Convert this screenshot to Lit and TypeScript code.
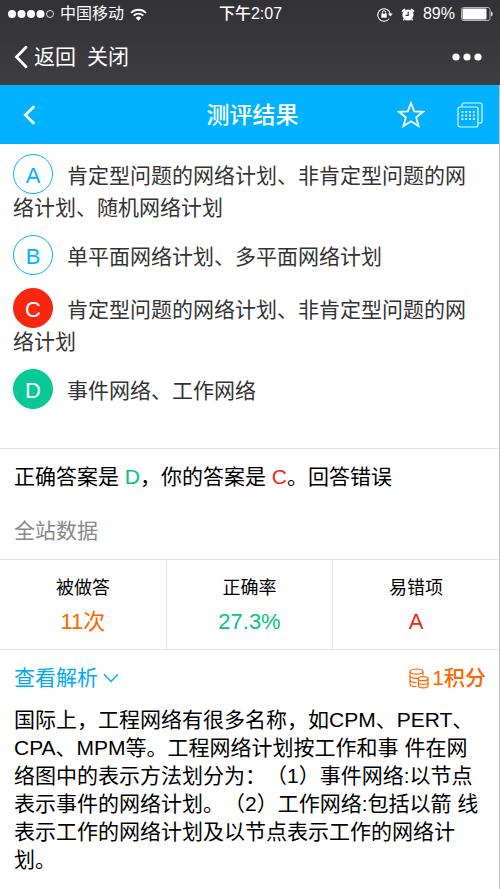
import { LitElement, html, css, svg } from "lit";
import { customElement } from "lit/decorators.js";
import { classMap } from "lit/directives/class-map.js";

type Mark = "plain" | "wrong" | "right";
interface Option {
  key: string;
  text: string;
  mark: Mark;
}

const OPTIONS: Option[] = [
  { key: "A", text: "肯定型问题的网络计划、非肯定型问题的网络计划、随机网络计划", mark: "plain" },
  { key: "B", text: "单平面网络计划、多平面网络计划", mark: "plain" },
  { key: "C", text: "肯定型问题的网络计划、非肯定型问题的网络计划", mark: "wrong" },
  { key: "D", text: "事件网络、工作网络", mark: "right" },
];

const EXPLANATION =
  "国际上，工程网络有很多名称，如CPM、PERT、CPA、MPM等。工程网络计划按工作和事 件在网络图中的表示方法划分为：（1）事件网络:以节点表示事件的网络计划。（2）工作网络:包括以箭 线表示工作的网络计划及以节点表示工作的网络计划。";

const base = css`
  :host {
    display: block;
  }
  button {
    display: flex;
    align-items: center;
    margin: 0;
    padding: 0;
    border: 0;
    background: none;
    color: inherit;
    font: inherit;
    cursor: pointer;
  }
  svg {
    display: block;
    flex: none;
  }
`;

@customElement("status-bar")
export class StatusBar extends LitElement {
  static styles = [
    base,
    css`
      .bar {
        display: grid;
        grid-template-columns: 1fr auto 1fr;
        align-items: center;
        height: 28px;
        padding: 0 7px 0 8px;
        font-size: 16px;
        line-height: 28px;
      }
      .side {
        display: flex;
        align-items: center;
        gap: 6px;
      }
      .end {
        justify-content: flex-end;
      }
      .time {
        font-weight: 500;
      }
    `,
  ];

  render() {
    return html`
      <div class="bar">
        <div class="side">
          <svg width="46" height="10" viewBox="0 0 46 10" fill="#fff">
            ${[4, 13.5, 23, 32.5].map((x) => svg`<circle cx=${x} cy="5" r="4"/>`)}
            <circle cx="42" cy="5" r="3.5" fill="none" stroke="#fff" stroke-width="0.8" />
          </svg>
          <span>中国移动</span>
          <svg width="17" height="13" viewBox="0 0 17 13" fill="none" stroke="#fff" stroke-width="1.9">
            <path d="M1 4.8a10.6 10.6 0 0 1 15 0M3.7 7.6a6.8 6.8 0 0 1 9.6 0" />
            <path d="M8.5 12.7 5.8 9.9a3.8 3.8 0 0 1 5.4 0z" fill="#fff" stroke="none" />
          </svg>
        </div>
        <span class="time">下午2:07</span>
        <div class="side end">
          <svg width="16" height="15" viewBox="0 0 16 15" fill="none" stroke="#fff">
            <path d="M12.2 11.7A6.3 6.3 0 1 1 13.3 7" stroke-width="1.1" />
            <path d="M10.9 6.6h4.8l-2.4 3z" fill="#fff" stroke="none" />
            <path d="M4.3 6.7h5.4v4H4.3z" fill="#fff" stroke="none" />
            <path d="M5.3 7V5.4a1.7 1.7 0 0 1 3.4 0V7" stroke-width="1" />
          </svg>
          <svg width="18" height="15" viewBox="0 0 18 15">
            <circle cx="9" cy="8" r="5.6" fill="#fff" />
            <path d="M3.6 4.2 5.6 2.500M14.400 4.200 12.400 2.500" stroke="#fff" stroke-width="1.800" stroke-linecap="round" />
            <path d="M5.200 12 4.400 13.400M12.800 12l.8 1.400" stroke="#fff" stroke-width="1.4" />
            <path d="M9.2 4.8v3.6H6.6" stroke="#38373c" stroke-width="1.2" fill="none" />
          </svg>
          <span>89%</span>
          <svg width="32" height="14" viewBox="0 0 32 14">
            <rect x="0.5" y="0.5" width="28.5" height="13" rx="2" fill="none" stroke="#b5b5b8" />
            <rect x="1.5" y="1.5" width="24" height="11" rx="1" fill="#fff" />
            <path d="M30 4.6c2.2.5 2.2 4.3 0 4.8z" fill="#ddd" />
          </svg>
        </div>
      </div>
    `;
  }
}

@customElement("browser-nav")
export class BrowserNav extends LitElement {
  static styles = [
    base,
    css`
      .nav {
        display: flex;
        align-items: center;
        height: 57px;
        padding: 0 18px 0 14px;
        font-size: 21px;
        line-height: 28px;
      }
      .back {
        gap: 6px;
        margin-right: 11px;
      }
      .more {
        margin-left: auto;
      }
    `,
  ];

  render() {
    return html`
      <nav class="nav">
        <button class="back">
          <svg width="14" height="24" viewBox="0 0 14 24" fill="none" stroke="#fff" stroke-width="2.8" stroke-linecap="round">
            <path d="M12 2.3 2.5 12 12 21.7" />
          </svg>
          返回
        </button>
        <button>关闭</button>
        <button class="more" aria-label="更多">
          <svg width="30" height="8" viewBox="0 0 30 8" fill="#fff">
            <circle cx="4" cy="4" r="3.6" />
            <circle cx="15" cy="4" r="3.6" />
            <circle cx="26" cy="4" r="3.6" />
          </svg>
        </button>
      </nav>
    `;
  }
}

@customElement("page-header")
export class PageHeader extends LitElement {
  static styles = [
    base,
    css`
      .header {
        display: grid;
        grid-template-columns: 1fr auto 1fr;
        align-items: center;
        height: 59px;
        padding: 0 16px 0 22px;
        background: #00b2ff;
        color: #fff;
      }
      .title {
        margin: 0;
        font-size: 23px;
        font-weight: 500;
        line-height: 32px;
      }
      .actions {
        display: flex;
        align-items: center;
        justify-content: flex-end;
        gap: 32px;
      }
    `,
  ];

  render() {
    return html`
      <header class="header">
        <button aria-label="返回">
          <svg width="14" height="20" viewBox="0 0 14 20" fill="none" stroke="#fff" stroke-width="2.6">
            <path d="M12.3 1.2 3.2 10l9.1 8.8" />
          </svg>
        </button>
        <h1 class="title">测评结果</h1>
        <div class="actions">
          <button aria-label="收藏">
            <svg width="28" height="28" viewBox="0 0 28 28" fill="none" stroke="#fff" stroke-width="1.8">
              <path d="M14 2l3.200 8.300 8.900.5-6.900 5.600 2.300 8.600L14 20.200 6.500 25l2.300-8.600-6.900-5.600 8.900-.5z" />
            </svg>
          </button>
          <button aria-label="答题卡">
            <svg width="26" height="26" viewBox="0 0 26 26" fill="none" stroke="#e2f6ff" stroke-width="1.2">
              <rect x="1" y="5" width="20" height="20" rx="2" />
              <path d="M5 5V3a2 2 0 0 1 2-2h16a2 2 0 0 1 2 2v16a2 2 0 0 1-2 2h-2" />
              <path d="M4.500 10h14M4.500 13.500h14M4.500 17h14" stroke-width="1.8" stroke-dasharray="1.800 2" />
            </svg>
          </button>
        </div>
      </header>
    `;
  }
}

@customElement("option-list")
export class OptionList extends LitElement {
  static styles = [
    base,
    css`
      .list {
        margin: 0;
        padding: 10px 13px 26px;
        list-style: none;
        color: #333;
      }
      .item {
        margin-bottom: 13px;
        line-height: 28px;
      }
      .key {
        display: inline-block;
        box-sizing: border-box;
        width: 40px;
        height: 40px;
        margin-right: 14px;
        border: 1px solid #00b2ff;
        border-radius: 50%;
        color: #00b2ff;
        font-size: 22px;
        line-height: 42px;
        text-align: center;
      }
      .wrong {
        border-color: #f9270f;
        background: #f9270f;
        color: #fff;
      }
      .right {
        border-color: #06c995;
        background: #06c995;
        color: #fff;
      }
    `,
  ];

  render() {
    return html`
      <ul class="list">
        ${OPTIONS.map(
          (o) => html`<li class="item"><span class=${classMap({
            key: true,
            wrong: o.mark === "wrong",
            right: o.mark === "right",
          })}>${o.key}</span>${o.text}</li>`
        )}
      </ul>
    `;
  }
}

@customElement("site-stats")
export class SiteStats extends LitElement {
  static styles = [
    base,
    css`
      .stats {
        width: 100%;
        border-collapse: collapse;
        table-layout: fixed;
        border-top: 1px solid #e4e4e4;
        border-bottom: 1px solid #e4e4e4;
        text-align: center;
      }
      .label,
      .value {
        padding: 0;
        border-left: 1px solid #e4e4e4;
        font-weight: 400;
      }
      .label:first-child,
      .value:first-child {
        border-left: 0;
      }
      .label {
        padding-top: 14px;
        font-size: 18px;
        line-height: 28px;
      }
      .value {
        padding: 4px 0 11px;
        font-size: 22px;
        line-height: 32px;
      }
      .orange {
        color: #ff6600;
      }
      .green {
        color: #06c384;
      }
      .red {
        color: #f52313;
      }
    `,
  ];

  render() {
    return html`
      <table class="stats">
        <thead>
          <tr>
            <th class="label" scope="col">被做答</th>
            <th class="label" scope="col">正确率</th>
            <th class="label" scope="col">易错项</th>
          </tr>
        </thead>
        <tbody>
          <tr>
            <td class="value orange">11次</td>
            <td class="value green">27.3%</td>
            <td class="value red">A</td>
          </tr>
        </tbody>
      </table>
    `;
  }
}

@customElement("app-root")
export class AppRoot extends LitElement {
  static styles = [
    base,
    css`
      :host {
        min-height: 100vh;
        background: #fff;
        color: #000;
        font-family: "Liberation Sans", "Noto Sans CJK SC", sans-serif;
        font-size: 21px;
        text-spacing-trim: space-all;
      }
      .page {
        box-sizing: border-box;
        min-height: 100vh;
        border-right: 1px solid #c4c4c4;
      }
      .chrome {
        margin-right: -1px;
        background: linear-gradient(#323136, #3e3d42);
        color: #fff;
      }
      .answer {
        margin: 0;
        padding: 14px 14px 12px;
        border-top: 1px solid #e4e4e4;
        line-height: 28px;
      }
      .section {
        margin: 0;
        padding: 14px;
        color: #888;
        font-size: 21px;
        font-weight: 400;
        line-height: 28px;
      }
      .right {
        color: #06c384;
      }
      .wrong {
        color: #f52313;
      }
      .toolbar {
        display: flex;
        align-items: center;
        justify-content: space-between;
        padding: 14px 13px 14px 14px;
        line-height: 28px;
      }
      .toggle {
        gap: 5px;
        color: #00aaf5;
      }
      .points {
        display: flex;
        align-items: center;
        gap: 3px;
        color: #ff6600;
        font-weight: 500;
      }
      .explanation {
        margin: 0;
        padding: 0 14px 14px;
        line-height: 28px;
      }
    `,
  ];

  render() {
    return html`
      <div class="page">
        <div class="chrome">
          <status-bar></status-bar>
          <browser-nav></browser-nav>
        </div>
        <page-header></page-header>
        <main>
          <option-list></option-list>
          <p class="answer">正确答案是 <span class="right">D</span>，你的答案是 <span class="wrong">C</span>。回答错误</p>
          <h2 class="section">全站数据</h2>
          <site-stats></site-stats>
          <div class="toolbar">
            <button class="toggle" aria-expanded="true">
              查看解析
              <svg width="16" height="10" viewBox="0 0 16 10" fill="none" stroke="#00aaf5" stroke-width="1.3">
                <path d="M1 1.2 8 8.5l7-7.3" />
              </svg>
            </button>
            <span class="points">
              <svg width="20" height="21" viewBox="0 0 20 21" fill="none" stroke="#ff6600" stroke-width="1.2">
                <ellipse cx="7.5" cy="3.6" rx="6.5" ry="2.6" />
                <path d="M1 3.6v12.6c0 1.3 2.8 2.4 6.5 2.500M14 3.600v4M1 7.800c0 1.400 2.900 2.500 6.500 2.500h1.500M1 12c0 1.400 2.900 2.500 6.500 2.500" />
                <ellipse cx="14.2" cy="10.7" rx="4.8" ry="2" />
                <path d="M9.4 10.7v7.1c0 1.200 2.100 2.100 4.800 2.100s4.800-.9 4.800-2.100v-7.100M9.400 14.200c0 1.200 2.100 2.100 4.800 2.100s4.800-.9 4.800-2.100" />
              </svg>
              1积分
            </span>
          </div>
          <p class="explanation">${EXPLANATION}</p>
        </main>
      </div>
    `;
  }
}
